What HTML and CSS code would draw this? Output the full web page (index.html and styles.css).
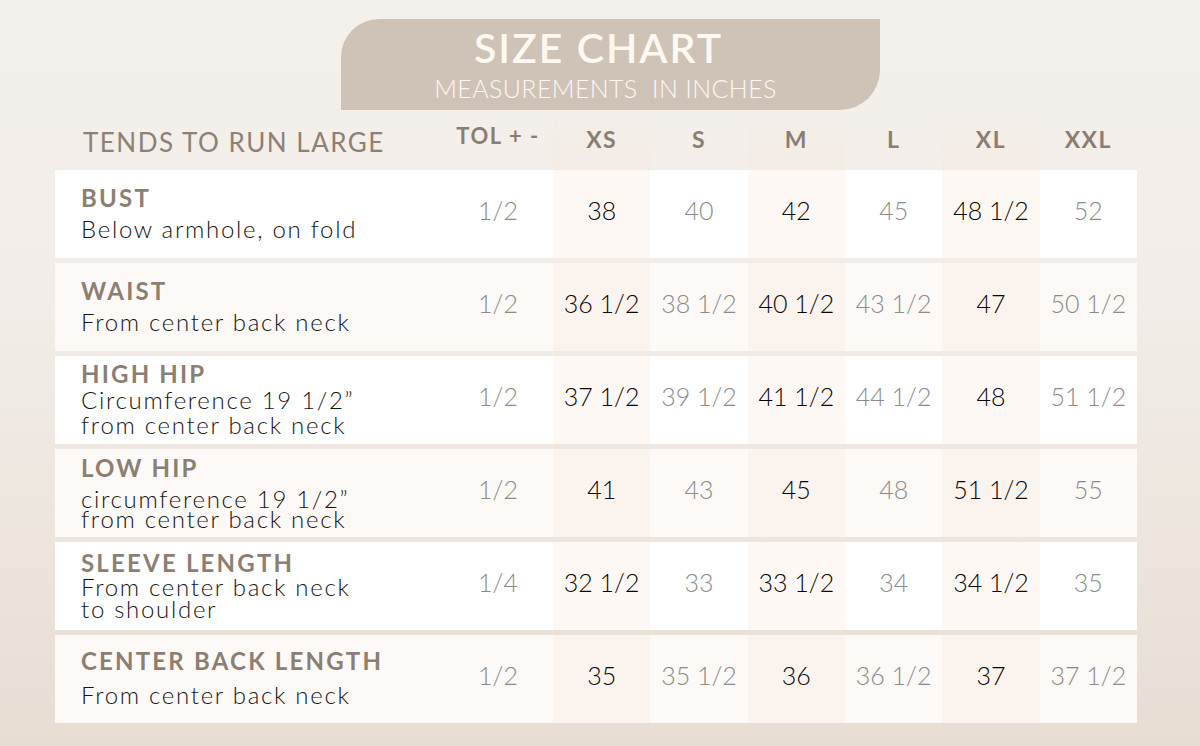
FILE: index.html
```html
<!DOCTYPE html>
<html>
<head>
<meta charset="utf-8">
<link rel="stylesheet" href="styles.css">
</head>
<body>
<div class="page">
  <div class="banner">
    <div class="banner-title">SIZE CHART</div>
    <div class="banner-sub">MEASUREMENTS&nbsp; IN INCHES</div>
  </div>

  <div class="chart">
    <div class="row head">
      <div class="cell lab"><span class="run">TENDS TO RUN LARGE</span></div>
      <div class="cell tol-h">TOL + -</div>
      <div class="cell sz t">XS</div>
      <div class="cell sz">S</div>
      <div class="cell sz t">M</div>
      <div class="cell sz">L</div>
      <div class="cell sz t">XL</div>
      <div class="cell sz">XXL</div>
    </div>

    <div class="row white r-bust">
      <div class="cell lab"><div class="name">BUST</div><div class="desc">Below armhole, on fold</div></div>
      <div class="cell v g">1/2</div>
      <div class="cell v d t">38</div>
      <div class="cell v g">40</div>
      <div class="cell v d t">42</div>
      <div class="cell v g">45</div>
      <div class="cell v d t">48 1/2</div>
      <div class="cell v g">52</div>
    </div>

    <div class="row cream r-waist">
      <div class="cell lab"><div class="name">WAIST</div><div class="desc">From center back neck</div></div>
      <div class="cell v g">1/2</div>
      <div class="cell v d t">36 1/2</div>
      <div class="cell v g">38 1/2</div>
      <div class="cell v d t">40 1/2</div>
      <div class="cell v g">43 1/2</div>
      <div class="cell v d t">47</div>
      <div class="cell v g">50 1/2</div>
    </div>

    <div class="row white r-high">
      <div class="cell lab"><div class="name">HIGH HIP</div><div class="desc">Circumference 19 1/2”<br>from center back neck</div></div>
      <div class="cell v g">1/2</div>
      <div class="cell v d t">37 1/2</div>
      <div class="cell v g">39 1/2</div>
      <div class="cell v d t">41 1/2</div>
      <div class="cell v g">44 1/2</div>
      <div class="cell v d t">48</div>
      <div class="cell v g">51 1/2</div>
    </div>

    <div class="row cream r-low">
      <div class="cell lab"><div class="name">LOW HIP</div><div class="desc">circumference 19 1/2”<br>from center back neck</div></div>
      <div class="cell v g">1/2</div>
      <div class="cell v d t">41</div>
      <div class="cell v g">43</div>
      <div class="cell v d t">45</div>
      <div class="cell v g">48</div>
      <div class="cell v d t">51 1/2</div>
      <div class="cell v g">55</div>
    </div>

    <div class="row white r-sleeve">
      <div class="cell lab"><div class="name">SLEEVE LENGTH</div><div class="desc">From center back neck<br>to shoulder</div></div>
      <div class="cell v g">1/4</div>
      <div class="cell v d t">32 1/2</div>
      <div class="cell v g">33</div>
      <div class="cell v d t">33 1/2</div>
      <div class="cell v g">34</div>
      <div class="cell v d t">34 1/2</div>
      <div class="cell v g">35</div>
    </div>

    <div class="row cream r-cbl">
      <div class="cell lab"><div class="name">CENTER BACK LENGTH</div><div class="desc">From center back neck</div></div>
      <div class="cell v g">1/2</div>
      <div class="cell v d t">35</div>
      <div class="cell v g">35 1/2</div>
      <div class="cell v d t">36</div>
      <div class="cell v g">36 1/2</div>
      <div class="cell v d t">37</div>
      <div class="cell v g">37 1/2</div>
    </div>
  </div>
</div>
</body>
</html>
```

FILE: styles.css
```css
* { box-sizing: border-box; }

html, body {
  margin: 0;
  padding: 0;
}

body {
  width: 1200px;
  height: 746px;
  overflow: hidden;
  background: linear-gradient(180deg, #f4f0ec 0%, #f2ede8 40%, #ebe3db 80%, #e7ddd3 100%);
  font-family: "Lato", "Liberation Sans", sans-serif;
}

.page {
  padding-top: 19px;
}

.banner {
  width: 539px;
  height: 91px;
  margin-left: 341px;
  background: #cfc3b7;
  border-radius: 38px 0 40px 0;
  display: flex;
  flex-direction: column;
  align-items: center;
  padding-right: 24px;
  padding-top: 6px;
  color: #fcf8f2;
}

.banner-title {
  font-size: 41px;
  font-weight: 600;
  letter-spacing: 2px;
  line-height: 46px;
}

.banner-sub {
  font-size: 25px;
  font-weight: 300;
  letter-spacing: 0.4px;
  line-height: 30px;
  margin-top: 2px;
  padding-left: 14px;
}

.chart {
  margin-left: 55px;
  width: 1082px;
  display: flex;
  flex-direction: column;
  gap: 5px;
}

.row {
  display: grid;
  grid-template-columns: 388px 110px repeat(6, 1fr);
  height: 88px;
}

.row.head {
  height: 60px;
  margin-bottom: -5px;
}

.white { background: #ffffff; }
.cream { background: #fcf9f6; }

.cell {
  display: flex;
  align-items: center;
  justify-content: center;
}

.t { background: rgba(250, 222, 205, 0.2); }
.head .t { background: linear-gradient(180deg, rgba(250, 222, 205, 0) 0%, rgba(250, 222, 205, 0.16) 100%); }

.cell.lab {
  justify-content: center;
  align-items: flex-start;
  flex-direction: column;
  padding-left: 26px;
  padding-bottom: 4px;
}

.head .cell.lab {
  padding-bottom: 0;
  padding-top: 4px;
}

.run {
  font-size: 26px;
  font-weight: 400;
  color: #8c8177;
  letter-spacing: 1.5px;
  padding-left: 2px;
}

.tol-h {
  font-size: 22px;
  font-weight: 700;
  color: #8a7e74;
  letter-spacing: 1.5px;
  padding-bottom: 10px;
}

.sz {
  font-size: 23px;
  font-weight: 700;
  color: #8a7e73;
  letter-spacing: 1.5px;
  padding-bottom: 2px;
}

.name {
  font-size: 24px;
  font-weight: 700;
  color: #8b7f74;
  letter-spacing: 2.2px;
  line-height: 27px;
}

.desc {
  font-size: 24px;
  font-weight: 300;
  color: #151515;
  letter-spacing: 1.7px;
  line-height: 25px;
  margin-top: 5px;
}

.r-high .desc { margin-top: 0; }
.r-low .desc { line-height: 20px; margin-top: 8px; }
.r-sleeve .desc { line-height: 22px; margin-top: 0; }
.r-cbl .desc { margin-top: 8px; }

.v {
  font-size: 25px;
  font-weight: 300;
  padding-bottom: 8px;
  white-space: nowrap;
}

.d { color: #050505; }
.g { color: #8b8b8b; }
```
